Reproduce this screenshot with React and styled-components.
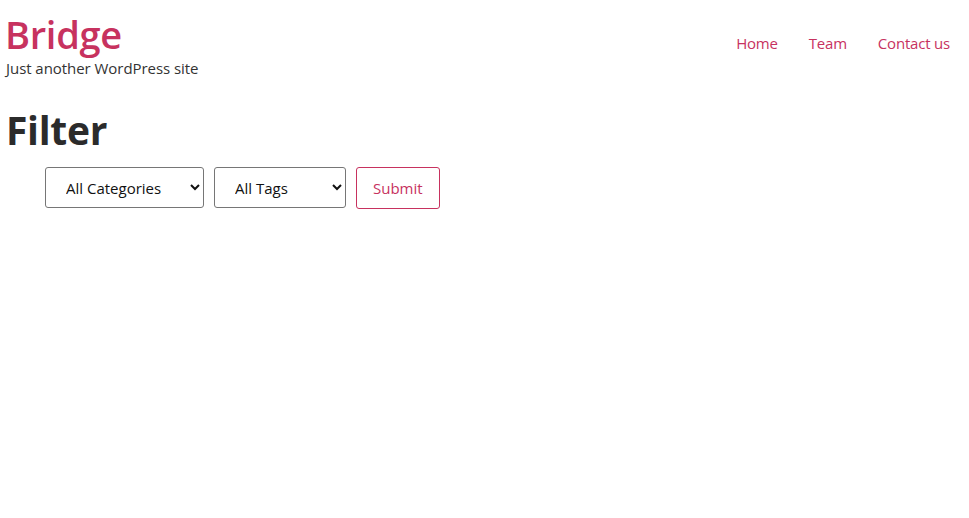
import React from 'react';
import styled, { createGlobalStyle } from 'styled-components';

const GlobalStyle = createGlobalStyle`
  body {
    margin: 0;
    background: #fff;
    font-family: "Open Sans", "Noto Sans", sans-serif;
    color: #333;
  }
`;

const Page = styled.div`
  padding: 0 6px;
`;

const Header = styled.header`
  display: flex;
  justify-content: space-between;
  align-items: flex-start;
  padding-top: 10px;
`;

const Branding = styled.div`
  display: flex;
  flex-direction: column;
`;

const SiteTitle = styled.a`
  font-size: 38px;
  line-height: 48px;
  font-weight: 600;
  color: #c7325f;
  text-decoration: none;
  letter-spacing: -0.3px;
  margin-left: -1px;
`;

const Tagline = styled.p`
  margin: 0;
  font-size: 15px;
  line-height: 20px;
  color: #333;
  letter-spacing: -0.05px;
`;

const Nav = styled.nav`
  display: flex;
  gap: 31px;
  padding-top: 23px;
  padding-right: 13px;
`;

const NavLink = styled.a`
  font-size: 15px;
  color: #c7325f;
  text-decoration: none;
  letter-spacing: -0.2px;
`;

const Heading = styled.h1`
  margin: 29px 0 14px;
  font-size: 39px;
  line-height: 46px;
  font-weight: 700;
  color: #2b2b2b;
  letter-spacing: -0.3px;
`;

const FilterForm = styled.form`
  display: flex;
  gap: 10px;
  padding-left: 39px;
`;

const Select = styled.select`
  width: ${(p) => p.$width}px;
  height: 41px;
  padding: 0 8px 0 16px;
  border: 1px solid #767676;
  border-radius: 3px;
  background: #fff;
  font-family: inherit;
  font-size: 15px;
  color: #111;
`;

const SubmitButton = styled.button`
  height: 42px;
  padding: 0 16px;
  border: 1px solid #c7325f;
  border-radius: 3px;
  background: #fff;
  color: #c7325f;
  font-family: inherit;
  font-size: 15px;
  cursor: pointer;
`;

export default function App() {
  return (
    <Page>
      <GlobalStyle />
      <Header>
        <Branding>
          <SiteTitle href="#">Bridge</SiteTitle>
          <Tagline>Just another WordPress site</Tagline>
        </Branding>
        <Nav>
          <NavLink href="#">Home</NavLink>
          <NavLink href="#">Team</NavLink>
          <NavLink href="#">Contact us</NavLink>
        </Nav>
      </Header>
      <Heading>Filter</Heading>
      <FilterForm onSubmit={(e) => e.preventDefault()}>
        <Select $width={159} defaultValue="">
          <option value="">All Categories</option>
        </Select>
        <Select $width={132} defaultValue="">
          <option value="">All Tags</option>
        </Select>
        <SubmitButton type="submit">Submit</SubmitButton>
      </FilterForm>
    </Page>
  );
}
